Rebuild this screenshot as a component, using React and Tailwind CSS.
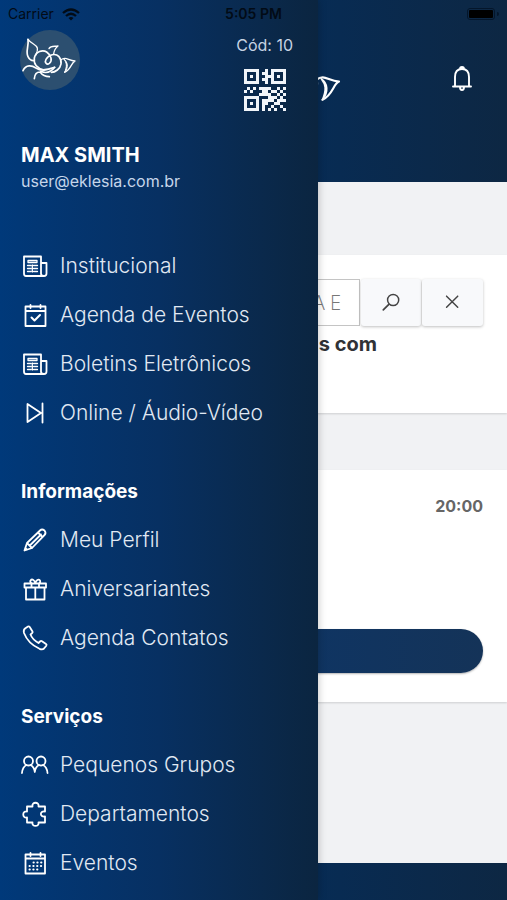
import React from 'react';

const QR_ROWS = [
  '11111001011111',
  '10001011010001',
  '10101001110101',
  '10001011010001',
  '11111001011111',
  '00000000000000',
  '01010111100101',
  '10100011011010',
  '00000111100101',
  '11111000111010',
  '10001011110111',
  '10101011001100',
  '10001010010010',
  '11111010101001',
];

const QrCode = () => (
  <svg viewBox="0 0 14 14" className="size-[42px] fill-[#f1f5fa]" shapeRendering="crispEdges" aria-label="QR">
    {QR_ROWS.map((row, y) =>
      row.split('').map((cell, x) =>
        cell === '1' ? <rect key={`${x}-${y}`} x={x} y={y} width="1" height="1" /> : null
      )
    )}
  </svg>
);

const Dove = ({ className }) => (
  <svg viewBox="0 0 180 180" className={className} fill="none" stroke="white" strokeLinecap="round" strokeLinejoin="round">
    {/* Wings */}
    <path d="M24 28C27 50 16 64 24 80C28 88 34 92 40 92" strokeWidth="5" />
    <path d="M24 28C34 42 48 42 52 54C54 62 50 68 47 76" strokeWidth="4" />
    <path d="M87 56C92 46 104 50 114 48C106 54 102 62 101 72" strokeWidth="4" />
    <path d="M122 90C138 78 144 92 165 93C154 97 154 118 134 127" strokeWidth="4" />
    <path d="M132 88C144 96 146 112 134 127C142 108 140 98 132 88Z" fill="white" strokeWidth="3" />
    {/* Heart body */}
    <path d="M72 120C54 116 40 104 43 84C47 64 68 58 80 66C94 76 98 92 88 100C80 106 73 97 78 88C86 74 106 68 117 80C128 94 124 110 112 120C106 125 100 127 94 127" strokeWidth="5" />
    {/* Tail */}
    <path d="M9 122C18 102 36 106 48 114C66 126 88 118 104 112" strokeWidth="5" />
    <path d="M104 112C92 128 76 130 62 124M43 146C44 134 50 126 60 126C66 134 76 140 88 140" strokeWidth="5" />
  </svg>
);

const Icon = ({ children, className = 'size-7' }) => (
  <svg
    viewBox="0 0 28 28"
    className={`${className} shrink-0`}
    fill="none"
    stroke="currentColor"
    strokeWidth="1.8"
    strokeLinejoin="round"
    strokeLinecap="round"
    aria-hidden="true"
  >
    {children}
  </svg>
);

const NewsIcon = () => (
  <Icon>
    <path d="M20 22V4.500H3V21.500Q3 24 5 24H23Q25.500 24 25.500 21.500V11H20V21.500Q20 24 23 24" />
    <path d="M7 8.500H16V10.500H7ZM6.500 13.500H10M12.500 13.500H16.500M6.500 16.500H10M12.500 16.500H16.500M6.500 19.500H10M12.500 19.500H16.500M11.300 13V20" strokeWidth="1.3" />
  </Icon>
);

const CalendarCheckIcon = () => (
  <Icon>
    <path d="M4.500 5.500H24.500V25H4.500ZM4.500 10H24.500M9.500 4V7M19.500 4V7" />
    <path d="M10.500 16.500L13.500 19.500L19 14" strokeWidth="2" />
  </Icon>
);

const NextIcon = () => (
  <Icon>
    <path d="M6.500 5V23L20 14ZM21.500 4.500V23.500" />
  </Icon>
);

const PencilIcon = () => (
  <Icon>
    <path d="M3.500 24.500L6 17L19 4.500Q21 2.500 23.500 4.500Q25.500 7 23.500 9L11 22ZM6 17L11 22M17 6.500L21.500 11M8.800 19.500L20 8.500M3.500 24.500L6 23.700L4.300 22Z" />
  </Icon>
);

const GiftIcon = () => (
  <Icon>
    <path d="M3.500 8.500H25V12.500H3.500ZM5 12.500V24.500H23.500V12.500M14.300 12.500V24.500M10.500 8.500V12.500M18 8.500V12.500M14.300 8.500C11 9 8.500 7.500 9.500 5.500C11 3.500 14 5 14.300 8.500C15 5 17.500 3.500 19 5.500C20 7.500 18 9 14.300 8.500Z" />
  </Icon>
);

const PhoneIcon = () => (
  <Icon>
    <path d="M4 4.500L7 2.500Q8 2 8.700 3L11.500 7.500Q12 8.500 11 9.300L9.500 10.500Q11.500 15.500 17.500 19L19 17.500Q20 16.500 21 17.200L25 20Q26 20.700 25.300 21.700L23 24.500Q21.500 26 18.500 24.800Q7 19.500 3 9Q2.200 6 4 4.500Z" />
  </Icon>
);

const PeopleIcon = () => (
  <Icon>
    <circle cx="7.500" cy="10" r="4.500" />
    <circle cx="20" cy="10" r="4.500" />
    <path d="M1 22Q1.500 16 5.500 14M9.500 14Q13.300 16 13.800 21Q14.300 16 18 14M22 14Q26 16 26.500 22" />
  </Icon>
);

const PuzzleIcon = () => (
  <Icon>
    <path d="M6 6.500H11.500C10.500 1.500 18.500 1.500 17.500 6.500H24V11.500C18.500 10.500 18.500 17.500 24 16.500V22.500H17.500C18.500 27 10.500 27 11.500 22.500H6V17.500C1 18.500 1 10.500 6 11.500Z" />
  </Icon>
);

const CalendarIcon = () => (
  <Icon>
    <path d="M4.500 5.500H24V24.500H4.500ZM4.500 9.500H24M9.500 4V7M19.500 4V7" />
    <path d="M12.500 13.500H21M8.500 17H21M8.500 20.500H18" strokeWidth="2" strokeDasharray="0.300 3.500" />
  </Icon>
);

const sections = [
  {
    title: null,
    items: [
      { label: 'Institucional', icon: NewsIcon },
      { label: 'Agenda de Eventos', icon: CalendarCheckIcon },
      { label: 'Boletins Eletrônicos', icon: NewsIcon },
      { label: 'Online / Áudio-Vídeo', icon: NextIcon },
    ],
  },
  {
    title: 'Informações',
    items: [
      { label: 'Meu Perfil', icon: PencilIcon },
      { label: 'Aniversariantes', icon: GiftIcon },
      { label: 'Agenda Contatos', icon: PhoneIcon },
    ],
  },
  {
    title: 'Serviços',
    items: [
      { label: 'Pequenos Grupos', icon: PeopleIcon },
      { label: 'Departamentos', icon: PuzzleIcon },
      { label: 'Eventos', icon: CalendarIcon },
    ],
  },
];

const StatusBar = () => (
  <div className="absolute inset-x-0 top-0 z-20 grid h-7 grid-cols-3 items-center px-2 text-sm text-[#020b16]">
    <div className="flex items-center gap-2">
      <span>Carrier</span>
      <svg viewBox="0 0 18 13" className="h-[13px] w-[18px]" fill="none" stroke="currentColor" strokeWidth="2.300" aria-hidden="true">
        <path d="M1 5Q9 -2 17 5M4 8Q9 3.500 14 8" />
        <path d="M6.500 10Q9 8 11.500 10L9 12.500Z" fill="currentColor" stroke="none" />
      </svg>
    </div>
    <span className="text-center font-semibold">5:05 PM</span>
    <div className="flex items-center justify-end gap-[2px]">
      <span className="rounded-[3px] border border-[#04162b] p-px">
        <span className="block h-2 w-6 rounded-[1px] bg-black" />
      </span>
      <span className="h-1 w-[2px] rounded-r bg-[#04162b]" />
    </div>
  </div>
);

const Drawer = () => (
  <aside className="absolute inset-y-0 left-0 z-10 w-[318px] bg-linear-to-r from-[#00397a] via-[#073062] to-[#0b2540] pt-[30px] text-white shadow-[0_0_8px_rgba(0,0,0,0.25)]">
    <div className="flex items-start justify-between pr-[25px] pl-5">
      <div className="size-[60px] rounded-full bg-[#2c4f70]">
        <Dove className="size-[60px]" />
      </div>
      <div className="flex flex-col items-center gap-3 pt-[3px]">
        <span className="text-base leading-6 text-[#c6d3e3]">Cód: 10</span>
        <QrCode />
      </div>
    </div>
    <div className="px-[21px] pt-[30px]">
      <h1 className="text-xl leading-7 font-bold">MAX SMITH</h1>
      <p className="text-base leading-6 text-[#c6d6ea]">user@eklesia.com.br</p>
    </div>
    <nav className="pt-12">
      {sections.map((section) => (
        <section key={section.items[0].label}>
          {section.title && (
            <h2 className="mt-[43px] mb-[11px] px-[21px] text-[19px] leading-6 font-bold">{section.title}</h2>
          )}
          <ul>
            {section.items.map(({ label, icon: ItemIcon }) => (
              <li key={label}>
                <a href="#" className="flex h-[49px] items-center gap-[11px] px-[21px]">
                  <ItemIcon />
                  <span className="text-[21px] leading-7 font-light text-[#e1e9f3]">{label}</span>
                </a>
              </li>
            ))}
          </ul>
        </section>
      ))}
    </nav>
  </aside>
);

const App = () => (
  <div className="relative flex min-h-screen flex-col overflow-hidden bg-[#f1f2f4] font-['Inter','Liberation_Sans',sans-serif]">
    <StatusBar />
    <Drawer />

    <header className="flex h-[182px] items-start justify-end bg-linear-to-r from-[#00397a] via-[#052d5a] to-[#0d2743] pt-8 pr-[31px] text-white">
      <Dove className="size-24" />
      <button type="button" aria-label="Notificações" className="mt-8 ml-[101px]">
        <Icon className="size-7">
          <path d="M7 22V13Q7 5 14 5Q21 5 21 13V22M5 22.500H23M12 5Q12 3 14 3Q16 3 16 5M12 23Q12 26 14 26Q16 26 16 23" strokeWidth="1.900" />
        </Icon>
      </button>
    </header>

    <main className="flex-1 pt-[73px]">
      <section className="h-[158px] bg-white pt-6 shadow-[0_1px_2px_rgba(0,0,0,0.15)]">
        <div className="flex h-[47px] gap-px px-6">
          <input
            type="text"
            aria-label="Buscar"
            placeholder="A E"
            className="min-w-0 flex-1 border border-[#c4c4c4] bg-white pr-[18px] text-right font-['Open_Sans',sans-serif] text-xl font-light placeholder:text-[#777]"
          />
          <button type="button" aria-label="Pesquisar" className="flex w-[60px] items-center justify-center rounded-[3px] bg-[#f8f9fb] text-[#444] shadow-[0_1px_3px_rgba(0,0,0,0.25)]">
            <Icon className="size-6">
              <path d="M11.500 15.500L5 22" strokeWidth="2" />
              <circle cx="16.500" cy="10.500" r="6.500" strokeWidth="1.700" />
            </Icon>
          </button>
          <button type="button" aria-label="Limpar" className="flex w-[61px] items-center justify-center rounded-[3px] bg-[#f8f9fb] text-[#444] shadow-[0_1px_3px_rgba(0,0,0,0.25)]">
            <Icon className="size-6">
              <path d="M6.500 6L19.500 19M19.500 6L6.500 19" strokeWidth="1.700" />
            </Icon>
          </button>
        </div>
        <p className="pt-1 pr-[130px] text-right text-xl leading-7 font-bold text-[#303236]">s com</p>
      </section>

      <section className="mt-[57px] h-[232px] bg-white px-6 pt-6 shadow-[0_1px_2px_rgba(0,0,0,0.15)]">
        <time className="block text-right text-base leading-6 font-bold text-[#666]">20:00</time>
        <button type="button" aria-label="Abrir evento" className="mt-[111px] block h-11 w-full rounded-full bg-linear-to-r from-[#00397a] via-[#0d3566] to-[#143358] shadow-[0_1px_2px_rgba(0,0,0,0.3)]" />
      </section>
    </main>

    <footer className="h-[37px] bg-linear-to-r from-[#00397a] via-[#052d5a] to-[#0d2743]" />
  </div>
);

export default App;
